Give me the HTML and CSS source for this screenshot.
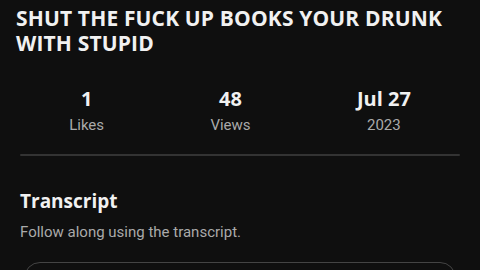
FILE: index.html
```html
<!DOCTYPE html>
<html>
<head>
<meta charset="utf-8">
<link rel="stylesheet" href="styles.css">
</head>
<body>
<div class="page">
  <h1 class="title">SHUT THE FUCK UP BOOKS YOUR DRUNK WITH STUPID</h1>
  <div class="stats">
    <div class="stat"><div class="num">1</div><div class="label">Likes</div></div>
    <div class="stat"><div class="num">48</div><div class="label">Views</div></div>
    <div class="stat"><div class="num">Jul 27</div><div class="label">2023</div></div>
  </div>
  <div class="divider"></div>
  <section class="transcript">
    <h2 class="t-head">Transcript</h2>
    <p class="t-sub">Follow along using the transcript.</p>
    <div class="t-box"></div>
  </section>
</div>
</body>
</html>
```
FILE: styles.css
```css
html, body {
  margin: 0;
  padding: 0;
  background: #0f0f0f;
  overflow: hidden;
}
.page {
  width: 480px;
  height: 270px;
  overflow: hidden;
}
.title {
  margin: 0;
  padding: 6px 16px 0 16px;
  font-family: "Open Sans", sans-serif;
  font-weight: 700;
  font-size: 21px;
  letter-spacing: 0.15px;
  line-height: 25px;
  color: #f1f1f1;
}
.stats {
  display: flex;
  justify-content: space-around;
  margin: 0 16px;
  padding-top: 31px;
}
.stat {
  display: flex;
  flex-direction: column;
  align-items: center;
}
.num {
  font-family: "Open Sans", sans-serif;
  font-weight: 700;
  font-size: 20px;
  line-height: 24px;
  color: #f1f1f1;
}
.label {
  margin-top: 4px;
  font-family: Roboto, sans-serif;
  font-size: 15px;
  line-height: 20px;
  color: #aaaaaa;
}
.divider {
  height: 2px;
  background: #333333;
  margin: 19px 20px 0 20px;
  border-radius: 1px;
}
.transcript {
  padding: 0 20px;
}
.t-head {
  margin: 32px 0 0 0;
  font-family: "Open Sans", sans-serif;
  font-weight: 700;
  font-size: 19px;
  line-height: 26px;
  color: #f1f1f1;
}
.t-sub {
  margin: 8px 0 0 0;
  font-family: Roboto, sans-serif;
  font-size: 15px;
  line-height: 20px;
  color: #aaaaaa;
}
.t-box {
  margin: 20px 4px 0 4px;
  height: 60px;
  border: 1px solid #444444;
  border-radius: 16px;
}
```
